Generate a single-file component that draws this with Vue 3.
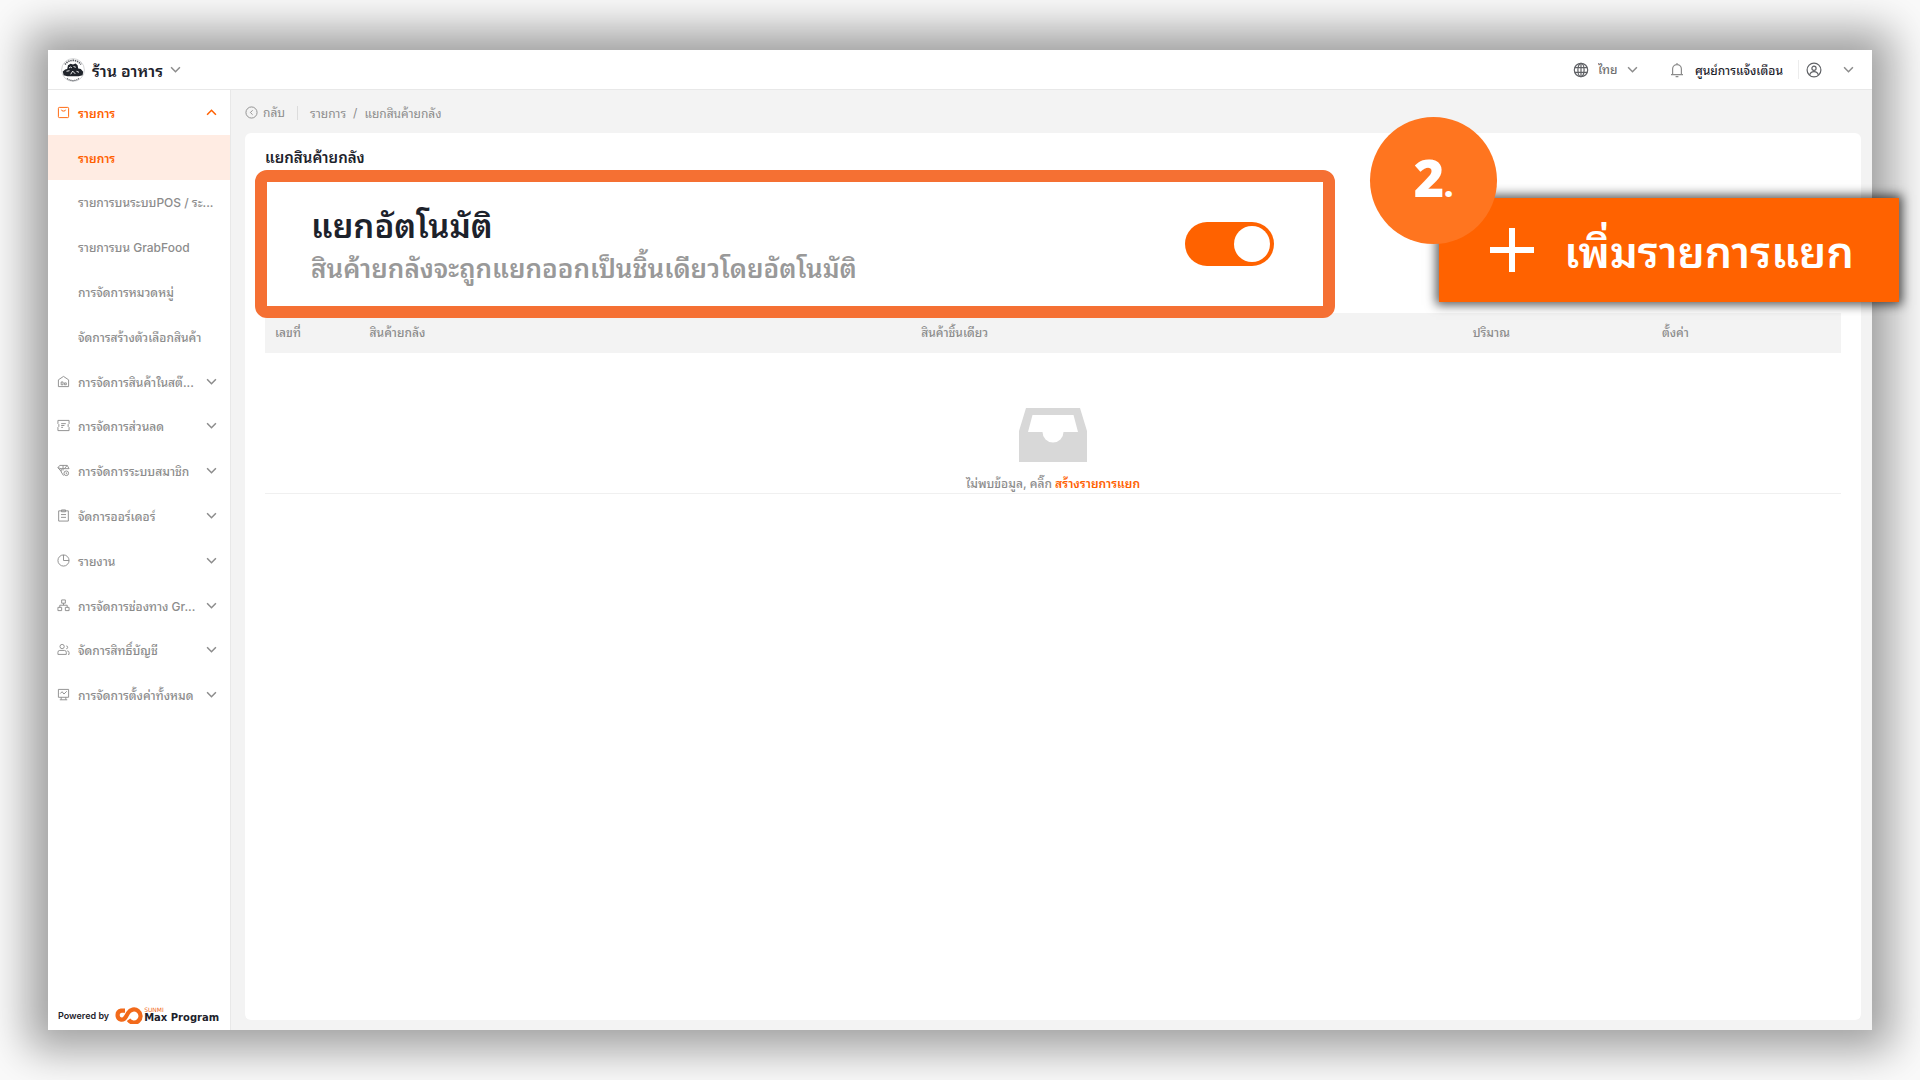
<template>
  <div class="stage">
    <div class="window">
      <header class="topbar">
        <button class="store" type="button">
          <svg class="store-logo" viewBox="0 0 24 24" fill="none">
            <circle cx="12" cy="12" r="11.4" stroke="#b9bbbe" stroke-width="0.6" />
            <path d="M4 6.500A9.800 9.800 0 0 1 20 6.500" stroke="#5a5d63" stroke-width="1.6" stroke-dasharray="1.4 0.8" />
            <path d="M6 20.500A9.800 9.800 0 0 0 18 20.500" stroke="#5a5d63" stroke-width="1.2" stroke-dasharray="1.2 0.7" />
            <path d="M1.800 13.500l2.400-2 2-.6.8-3.700 2.600-1.400 2.400.6 2.600-.8 2 1.600.6 3.300 2.600.6 2.400 2.600-.6 3.600-4 1H6.400l-3.800-1z" fill="#20242b" />
            <path d="M8 10l1.500-1 1.400.8M12.500 8.500l2.300.8M5.500 13.300l3-.6M9.700 16.300l2-3.200 2.600 2.800M15.500 13.300l2.500 1" stroke="#fff" stroke-width="0.9" />
          </svg>
          <span>ร้าน อาหาร</span>
          <svg class="arrow" viewBox="0 0 10 10"><path d="M1 3l4 4 4-4" /></svg>
        </button>

        <div class="topbar-right">
          <label class="language">
            <svg class="top-icon" viewBox="0 0 16 16">
              <circle cx="8" cy="8" r="6.7" />
              <ellipse cx="8" cy="8" rx="3.1" ry="6.7" />
              <path d="M1.800 5.600h12.400M1.800 10.400h12.400M8 1.300v13.400" />
            </svg>
            <select v-model="language" aria-label="ภาษา">
              <option value="th">ไทย</option>
            </select>
            <svg class="arrow" viewBox="0 0 10 10"><path d="M1 3l4 4 4-4" /></svg>
          </label>
          <button class="notice" type="button">
            <svg class="top-icon bell" viewBox="0 0 16 16">
              <path d="M2 12.6h12M3.6 12.4V7a4.4 4.4 0 0 1 8.8 0v5.4M8 2.6V1M6.6 14.7h2.8" />
            </svg>
            <span>ศูนย์การแจ้งเตือน</span>
          </button>
          <button class="account" type="button" aria-label="บัญชี">
            <svg class="top-icon" viewBox="0 0 16 16">
              <circle cx="8" cy="8" r="6.9" />
              <circle cx="8" cy="6.3" r="2.1" />
              <path d="M3.6 13c.6-2.3 2.2-3.4 4.4-3.4s3.8 1.1 4.4 3.4" />
            </svg>
            <svg class="arrow" viewBox="0 0 10 10"><path d="M1 3l4 4 4-4" /></svg>
          </button>
        </div>
      </header>

      <div class="body">
        <aside class="sidebar">
          <nav class="menu">
            <template v-for="group in menu" :key="group.label">
              <button class="menu-group" :class="{ open: group.children }" type="button">
                <svg class="menu-icon" viewBox="0 0 14 14">
                  <path v-for="d in group.icon" :key="d" :d="d" />
                </svg>
                <span class="menu-label">{{ group.label }}</span>
                <svg class="arrow" viewBox="0 0 10 10">
                  <path :d="group.children ? 'M1 7l4-4 4 4' : 'M1 3l4 4 4-4'" />
                </svg>
              </button>
              <a
                v-for="(child, i) in group.children"
                :key="child"
                class="menu-item"
                :class="{ active: i === 0 }"
                href="#"
              >{{ child }}</a>
            </template>
          </nav>
          <div class="powered">
            <span class="powered-by">Powered by</span>
            <svg class="powered-logo" viewBox="0 0 29 18" fill="none" stroke="#f26a1b" stroke-width="4.2">
              <path d="M11 4.600H7.200a4.600 4.600 0 0 0 0 9c2.200.3 3.600-.8 5-3.400l2-3.400A6.600 6.600 0 1 1 14.500 13.800" />
            </svg>
            <span class="powered-name">
              <span class="powered-brand">SUNMI</span>
              <strong>Max Program</strong>
            </span>
          </div>
        </aside>

        <main class="content">
          <div class="crumbs">
            <a class="back" href="#">
              <svg viewBox="0 0 14 14">
                <circle cx="7" cy="7" r="6" />
                <path d="M8.2 4.6L5.8 7l2.4 2.4" />
              </svg>
              <span>กลับ</span>
            </a>
            <a href="#">รายการ</a>
            <span class="slash">/</span>
            <span>แยกสินค้ายกลัง</span>
          </div>

          <section class="panel">
            <h1 class="panel-title">แยกสินค้ายกลัง</h1>

            <div class="tools">
              <div class="auto-split">
                <label class="auto-text" for="auto-split">
                  <span class="auto-title">แยกอัตโนมัติ</span>
                  <span class="auto-desc">สินค้ายกลังจะถูกแยกออกเป็นชิ้นเดียวโดยอัตโนมัติ</span>
                </label>
                <input id="auto-split" v-model="autoSplit" class="switch" type="checkbox" role="switch">
              </div>
              <div class="add">
                <button class="add-button" type="button">
                  <svg viewBox="0 0 44 44"><path d="M22 0v44M0 22h44" /></svg>
                  <span class="add-text">เพิ่มรายการแยก</span>
                </button>
                <span class="step">2<span class="step-dot">.</span></span>
              </div>
            </div>

            <table class="list">
              <colgroup>
                <col class="col-no">
                <col class="col-product">
                <col class="col-product">
                <col class="col-small">
                <col class="col-small">
              </colgroup>
              <thead>
                <tr>
                  <th v-for="name in columns" :key="name" scope="col">{{ name }}</th>
                </tr>
              </thead>
              <tbody>
                <tr>
                  <td class="empty" :colspan="columns.length">
                    <svg class="empty-icon" viewBox="0 0 68 54">
                      <path fill-rule="evenodd" d="M7 0h54l7 23v31H0V23zM13.500 7L9 24h14.500a10.500 10.500 0 0 0 21 0H59L54.500 7z" />
                    </svg>
                    <p>ไม่พบข้อมูล, คลิ๊ก <a href="#">สร้างรายการแยก</a></p>
                  </td>
                </tr>
              </tbody>
            </table>
          </section>
        </main>
      </div>
    </div>
  </div>
</template>

<script setup>
import { ref } from 'vue'

const language = ref('th')
const autoSplit = ref(true)

const columns = ['เลขที่', 'สินค้ายกลัง', 'สินค้าชิ้นเดียว', 'ปริมาณ', 'ตั้งค่า']

const menu = [
  {
    label: 'รายการ',
    icon: ['M2.500 1.500h9a1 1 0 0 1 1 1v9a1 1 0 0 1-1 1h-9a1 1 0 0 1-1-1v-9a1 1 0 0 1 1-1z', 'M4.800 4a2.200 1.500 0 0 0 4.400 0'],
    children: [
      'รายการ',
      'รายการบนระบบPOS / ระ...',
      'รายการบน GrabFood',
      'การจัดการหมวดหมู่',
      'จัดการสร้างตัวเลือกสินค้า',
    ],
  },
  {
    label: 'การจัดการสินค้าในสต๊...',
    icon: ['M1.500 12.500V5.200L7 1.500l5.500 3.700v7.300z', 'M4.500 10.500V7.500h2v3zM8 10.500v-2h2v2z'],
  },
  {
    label: 'การจัดการส่วนลด',
    icon: ['M1 5V1.500h12V5l-1 1v2l1 1v3.500H1V9l1-1V6z', 'M4.500 5h5M4.500 7h3.500M4.500 9h2'],
  },
  {
    label: 'การจัดการระบบสมาชิก',
    icon: ['M7 12.500L4.500 8.500V5L1 4l2-2.500h8L13 5H4.500M1 4l3.500 4', 'M6.500 1.500V7M11 1.500L8 5', 'M10 7.500a2.500 2.500 0 1 1 0 5 2.500 2.500 0 0 1 0-5z', 'M10 9v1.500h1'],
  },
  {
    label: 'จัดการออร์เดอร์',
    icon: ['M1.800 2h10.400v11H1.800z', 'M4.800 1h4.400v2H4.800zM4.300 6h5.400M4.300 9h5.400'],
  },
  {
    label: 'รายงาน',
    icon: ['M7 1a6 6 0 1 1 0 12A6 6 0 0 1 7 1z', 'M7 1v6h6'],
  },
  {
    label: 'การจัดการช่องทาง Gr...',
    icon: ['M5 1h4v3.500H5zM1 9h4v3.500H1zM9 9h4v3.500H9z', 'M7 4.500v2.200M3 9V6.700h8V9'],
  },
  {
    label: 'จัดการสิทธิ์บัญชี',
    icon: ['M5.500 1.500a2.300 2.300 0 1 1 0 4.600 2.300 2.300 0 0 1 0-4.600z', 'M1 12.300V10a2 2 0 0 1 2-2h5a2 2 0 0 1 2 2v2.300z', 'M10 3.200a1.500 1.500 0 1 1 0 3M11 8.500a2 2 0 0 1 2 2v1.800h-1'],
  },
  {
    label: 'การจัดการตั้งค่าทั้งหมด',
    icon: ['M1.500 1.500h11v8.500h-11z', 'M3.500 6l2-2 2 2.500 3-3M3 12.700h8M4.500 10v2.500M9.500 10v2.500'],
  },
]
</script>

<style>
body {
  margin: 0;
  background: #fafafa;
}
</style>

<style scoped>
.stage {
  box-sizing: border-box;
  display: flex;
  min-height: 100vh;
  padding: 50px 48px;
  overflow: hidden;
  font-family: Inter, "Noto Sans Thai Looped", Loma, "Noto Sans Thai", "Noto Sans", sans-serif;
  font-size: 12px;
  color: #8c8c8c;
}

button,
select {
  padding: 0;
  border: none;
  background: none;
  font: inherit;
  color: inherit;
  cursor: pointer;
}

a {
  color: inherit;
  text-decoration: none;
}

svg {
  flex-shrink: 0;
}

.window {
  display: flex;
  flex: 1;
  flex-direction: column;
  min-width: 0;
  background: #fff;
  box-shadow: 0 0 40px 20px rgba(0, 0, 0, 0.36);
}

.arrow {
  width: 11px;
  height: 11px;
  fill: none;
  stroke: #8c8c8c;
  stroke-width: 1.4;
}

/* top bar */
.topbar {
  display: flex;
  align-items: center;
  justify-content: space-between;
  height: 39px;
  padding: 0 18px 0 13px;
  border-bottom: 1px solid #e8e8e8;
}

.store {
  display: flex;
  align-items: center;
  gap: 7px;
  font-size: 16px;
  font-weight: 600;
  color: #1d222b;
}

.store-logo {
  width: 24px;
  height: 24px;
}

.topbar-right,
.language,
.notice,
.account {
  display: flex;
  align-items: center;
}

.top-icon {
  width: 16px;
  height: 16px;
  fill: none;
  stroke: #606266;
  stroke-width: 1.2;
}

.bell {
  stroke: #8c8c8c;
}

.language {
  gap: 9px;
}

.language select {
  appearance: none;
  font-weight: 500;
  color: #707070;
}

.notice {
  gap: 10px;
  margin-left: 31px;
  padding-right: 15px;
  border-right: 1px solid #ececec;
  font-weight: 500;
  color: #1d222b;
}

.account {
  gap: 21px;
  margin-left: 7px;
}

/* side menu */
.body {
  display: flex;
  flex: 1;
}

.sidebar {
  box-sizing: border-box;
  display: flex;
  flex-direction: column;
  justify-content: space-between;
  width: 183px;
  flex-shrink: 0;
  border-right: 1px solid #e8e8e8;
}

.menu {
  display: grid;
  grid-auto-rows: 1fr;
  height: 627px;
}

.menu-group,
.menu-item {
  display: flex;
  align-items: center;
  white-space: nowrap;
}

.menu-group {
  padding: 0 13px 0 9px;
  font-weight: 500;
  text-align: left;
}

.menu-icon {
  width: 13px;
  height: 13px;
  margin-right: 8px;
  fill: none;
  stroke: currentColor;
  stroke-width: 1;
}

.menu-label {
  flex: 1;
  min-width: 0;
}

.menu-group.open,
.menu-group.open .arrow {
  color: #ff6000;
  stroke: #ff6000;
}

.menu-group.open {
  font-weight: 600;
}

.menu-item {
  padding-left: 30px;
  font-weight: 500;
}

.menu-item.active {
  background: #ffece3;
  font-weight: 600;
  color: #ff6000;
}

.powered {
  display: flex;
  align-items: center;
  padding: 0 0 6px 10px;
  color: #1d222b;
}

.powered-by {
  font-family: Inter, sans-serif;
  font-size: 9px;
  font-weight: 600;
}

.powered-logo {
  width: 29px;
  height: 18px;
  margin: 0 1px 0 5px;
}

.powered-name {
  display: flex;
  flex-direction: column;
  font-family: "DejaVu Sans", sans-serif;
  font-size: 10px;
  line-height: 10px;
  white-space: nowrap;
}

.powered-brand {
  font-size: 6px;
  line-height: 6px;
  color: #f26a1b;
}

/* content */
.content {
  display: flex;
  flex: 1;
  flex-direction: column;
  min-width: 0;
  padding: 0 11px 10px 14px;
  background: #f3f3f3;
}

.crumbs {
  display: flex;
  align-items: center;
  height: 41px;
  padding-top: 2px;
}

.back {
  display: flex;
  align-items: center;
  gap: 5px;
  margin-right: 12px;
  padding-right: 12px;
  border-right: 1px solid #dcdcdc;
  line-height: 14px;
}

.back svg {
  width: 13px;
  height: 13px;
  fill: none;
  stroke: #8c8c8c;
}

.slash {
  margin: 0 7px;
}

.panel {
  flex: 1;
  padding: 0 20px;
  border-radius: 6px;
  background: #fff;
}

.panel-title {
  height: 37px;
  margin: 0;
  font-size: 15px;
  font-weight: 600;
  line-height: 50px;
  color: #1d222b;
}

.tools {
  position: relative;
  display: flex;
  align-items: flex-start;
  gap: 104px;
  margin: 0 -58px -5px -10px;
}

.auto-split {
  box-sizing: border-box;
  display: flex;
  flex: 1;
  align-items: center;
  justify-content: space-between;
  min-width: 0;
  height: 148px;
  padding: 0 49px 0 44px;
  border: 12px solid #f57033;
  border-radius: 12px;
  background: #fff;
}

.auto-text {
  display: flex;
  flex-direction: column;
  padding-top: 6px;
  white-space: nowrap;
}

.auto-title {
  font-size: 33px;
  font-weight: 600;
  line-height: 44px;
  color: #1d222b;
}

.auto-desc {
  font-size: 26px;
  font-weight: 600;
  line-height: 42px;
  color: #999;
}

.switch {
  display: flex;
  align-items: center;
  width: 89px;
  height: 44px;
  margin: 0;
  padding: 0 4px;
  box-sizing: border-box;
  appearance: none;
  border-radius: 22px;
  background: #ccc;
  cursor: pointer;
}

.switch::before {
  width: 36px;
  height: 36px;
  border-radius: 50%;
  background: #fff;
  content: "";
}

.switch:checked {
  justify-content: flex-end;
  background: #ff6200;
}

.add {
  position: relative;
  margin-top: 28px;
}

.add-button {
  display: flex;
  align-items: center;
  justify-content: center;
  gap: 30px;
  width: 460px;
  height: 104px;
  padding-left: 6px;
  background: #ff6200;
  box-shadow: 0 0 10px 3px rgba(0, 0, 0, 0.65);
  font-size: 43px;
  font-weight: 600;
  color: #fff;
  white-space: nowrap;
}

.add-button svg {
  width: 44px;
  height: 44px;
  stroke: #fff;
  stroke-width: 6;
}

.add-text {
  padding-bottom: 4px;
}

/* step marker on the corner of the button */
.step {
  position: absolute;
  top: -81px;
  left: -69px;
  width: 127px;
  height: 127px;
  border-radius: 50%;
  background: #ff751f;
  font-family: "Open Sans", sans-serif;
  font-size: 52px;
  font-weight: 800;
  line-height: 120px;
  text-align: center;
  color: #fff;
}

.step-dot {
  font-size: 32px;
}

/* table */
.list {
  width: 100%;
  border-collapse: collapse;
  table-layout: fixed;
}

.col-no {
  width: 6%;
}

.col-product {
  width: 35%;
}

.col-small {
  width: 12%;
}

.list th {
  height: 37px;
  padding: 0 10px 3px;
  background: #f3f3f3;
  font-weight: 500;
  text-align: left;
}

.empty {
  padding: 55px 0 0;
  border-bottom: 1px solid #f0f0f0;
  text-align: center;
}

.empty-icon {
  display: block;
  width: 68px;
  height: 54px;
  margin: 0 auto;
  fill: #d8d8d8;
}

.empty p {
  margin: 12px 0 0;
  font-weight: 500;
  line-height: 19px;
}

.empty a {
  font-weight: 600;
  color: #ff6000;
}
</style>
